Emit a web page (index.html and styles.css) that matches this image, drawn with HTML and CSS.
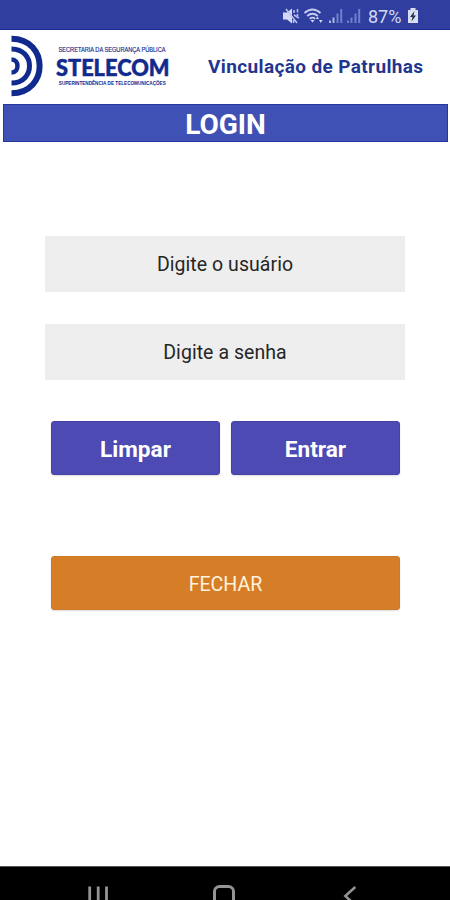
FILE: index.html
```html
<!DOCTYPE html>
<html lang="pt-BR">
<head>
<meta charset="utf-8">
<title>Vinculação de Patrulhas</title>
<link rel="stylesheet" href="styles.css">
</head>
<body>
<div class="status">
  <svg class="status-icons" width="82" height="20" viewBox="282 6 82 20">
    <path fill="#d3d9f4" d="M283 12.5h4l5-4v15l-5-4h-4z"/>
    <path fill="none" stroke="#b9c2ec" stroke-width="1.5" d="M286 9l11 14M294 10v3M297.500 9v3.500M294 15l5 3M293.500 20v3M297.500 14v2"/>
    <path fill="none" stroke="#c6cef0" stroke-width="1.7" d="M304.500 13q8-7 16 0M307.200 16q5.300-4.500 10.600 0M309.700 18.800q2.800-2.300 5.600 0"/>
    <path fill="#d3d9f4" d="M310.500 20h4l-2 2.500zM316 19h3l-1.500-2.500zM319 20h3.500l-1.700 3z"/>
    <path fill="#aab5e6" d="M329 20.500h2v2.500h-2zM332.500 17.500h2v5.500h-2z"/>
    <path fill="#7180ce" d="M336.500 13.500h2v9.500h-2zM340.200 9h2v14h-2zM347 20.500h2v2.500h-2zM350.500 17.500h2v5.500h-2zM354.500 13.500h2v9.500h-2zM358.200 9h2v14h-2z"/>
  </svg>
  <span class="percent">87%</span>
  <svg class="battery" width="12" height="17" viewBox="0 0 12 17">
    <path fill="#d8dff3" d="M3.500 1h5v2H11v13H1V3h2.500z"/>
    <path fill="#26304f" d="M7.500 4L3 10h2.500L4.500 14.500 9 8.500H6.500z"/>
  </svg>
</div>
<header class="header">
  <svg class="logo" width="176" height="68" viewBox="8 32 176 68">
    <g fill="none" stroke="#102a8d">
      <path stroke-width="6" d="M11.500 38.700C49 38.700 49 93.300 11.500 93.300"/>
      <path stroke-width="5" d="M11.500 49C35.500 49 35.500 83 11.500 83"/>
      <path stroke-width="4.500" d="M11.500 59.500C19.500 59.500 19.500 72.500 11.500 72.500"/>
    </g>
    <g fill="#102a8d" class="logo-text">
      <text x="58.500" y="52.300" font-size="6.300" textLength="107" lengthAdjust="spacingAndGlyphs" stroke="#102a8d" stroke-width=".15">SECRETARIA DA SEGURANÇA PÚBLICA</text>
      <text class="logo-name" x="56" y="75.500" font-size="23.500" textLength="113.500" lengthAdjust="spacingAndGlyphs" stroke="#102a8d" stroke-width=".5">STELECOM</text>
      <text class="logo-sub" x="58.800" y="85.300" font-size="5" textLength="107" lengthAdjust="spacingAndGlyphs">SUPERINTENDÊNCIA DE TELECOMUNICAÇÕES</text>
    </g>
  </svg>
  <h1 class="app-name">Vinculação de Patrulhas</h1>
</header>
<h2 class="banner">LOGIN</h2>
<main class="form">
  <div class="field user">Digite o usuário</div>
  <div class="field">Digite a senha</div>
  <div class="actions">
    <button class="btn">Limpar</button>
    <button class="btn">Entrar</button>
  </div>
  <button class="btn close">FECHAR</button>
</main>
<nav class="nav">
  <svg width="450" height="33" viewBox="0 867 450 33">
    <g fill="none" stroke="#949494">
      <path stroke-width="2.800" d="M89.700 886.500V907M98.200 886.500V907M106.500 886.500V907"/>
      <rect x="214.500" y="886.500" width="19" height="19" rx="5" stroke-width="3"/>
      <path stroke-width="2.500" d="M355.300 887l-10 9 10 9"/>
    </g>
  </svg>
</nav>
</body>
</html>
```
FILE: styles.css
```css
* { box-sizing: border-box; }
body {
  margin: 0;
  width: 450px;
  height: 900px;
  overflow: hidden;
  display: flex;
  flex-direction: column;
  background: #fff;
  font-family: Roboto, sans-serif;
}
svg { display: block; flex: none; }
.status {
  height: 30px;
  flex: none;
  display: flex;
  justify-content: flex-end;
  align-items: center;
  padding: 2px 31px 0 0;
  background: #303f9f;
  border-bottom: 1px solid #162b8c;
  color: #d3d9f4;
}
.percent {
  width: 35px;
  margin: 2px 4px 0 4px;
  font-size: 18px;
  line-height: 20px;
  white-space: nowrap;
}
.header {
  height: 74px;
  flex: none;
  display: flex;
  align-items: center;
  padding: 0 0 2px 8px;
}
.logo { overflow: visible; }
.logo-text { font-family: "Liberation Sans", sans-serif; }
.logo-name { font-family: Lato, sans-serif; font-weight: 900; }
.logo-sub { font-weight: 700; }
.app-name {
  margin: 0 0 0 24px;
  color: #22368f;
  font-size: 19px;
  font-weight: 700;
  letter-spacing: 0.37px;
  white-space: nowrap;
}
.banner {
  height: 38px;
  flex: none;
  margin: 0 2px 0 3px;
  padding-top: 2px;
  border: 1px solid #2637a0;
  background: #4051b5;
  color: #fff;
  font-size: 28px;
  font-weight: 700;
  line-height: 35px;
  text-align: center;
}
.form {
  flex: 1;
  display: flex;
  flex-direction: column;
  padding: 94px 45px 0;
}
.field {
  height: 56px;
  flex: none;
  background: #eee;
  color: #262626;
  font-size: 19.5px;
  line-height: 57px;
  letter-spacing: 0.05px;
  text-align: center;
}
.user { margin-bottom: 32px; }
.actions {
  display: flex;
  gap: 11px;
  margin: 41px 5px 0 6px;
}
.btn {
  flex: 1;
  height: 54px;
  padding: 2px 0 0;
  border: 1px solid #4743a6;
  border-radius: 3px;
  background: #4d4ab4;
  box-shadow: 0 1px 2px #0002;
  color: #fff;
  font: 700 22.6px Roboto, sans-serif;
}
.close {
  flex: none;
  margin: 81px 5px 0 6px;
  background: #d67e27;
  border-color: #cc7a29;
  color: #fff2de;
  font-size: 19.6px;
  font-weight: 400;
}
.nav {
  height: 34px;
  flex: none;
  border-top: 1px solid #555;
  background: #000;
}
```
